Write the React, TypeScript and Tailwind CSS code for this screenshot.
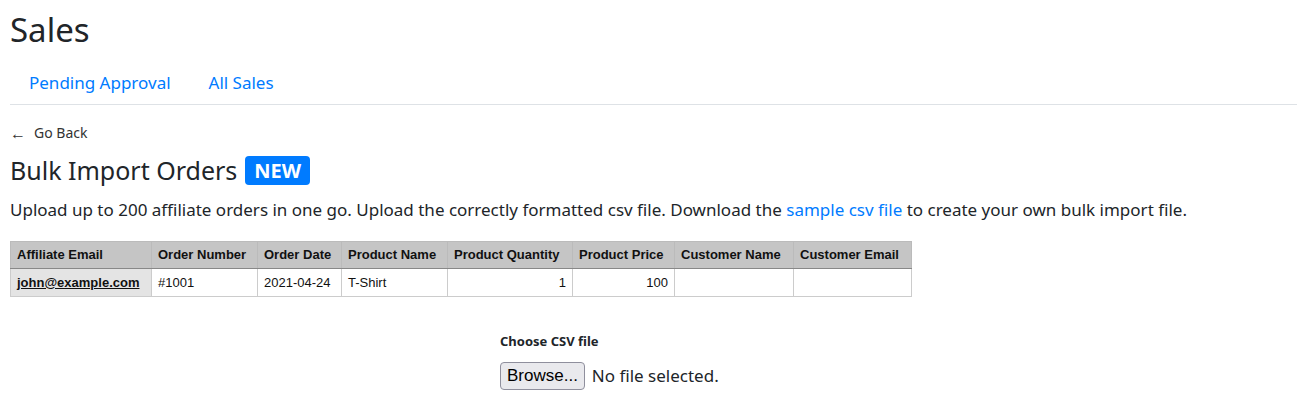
const cols = [
  { label: 'Affiliate Email', w: 'w-[141px]' },
  { label: 'Order Number', w: 'w-[106px]' },
  { label: 'Order Date', w: 'w-[84px]' },
  { label: 'Product Name', w: 'w-[106px]' },
  { label: 'Product Quantity', w: 'w-[125px]' },
  { label: 'Product Price', w: 'w-[102px]' },
  { label: 'Customer Name', w: 'w-[119px]' },
  { label: 'Customer Email', w: 'w-[118px]' },
]

const row = [
  { v: 'john@example.com', cls: 'font-bold underline bg-[#e4e4e4]' },
  { v: '#1001', cls: '' },
  { v: '2021-04-24', cls: '' },
  { v: 'T-Shirt', cls: '' },
  { v: '1', cls: 'text-right' },
  { v: '100', cls: 'text-right' },
  { v: '', cls: '' },
  { v: '', cls: '' },
]

export default function App() {
  return (
    <div className="min-h-[400px] bg-white px-[10px] pt-[10px] font-['Noto_Sans',sans-serif] text-[#212529]">
      <h1 className="text-[33px] leading-[40px] font-normal">Sales</h1>

      <nav className="mt-[21px] flex border-b border-[#dee2e6] pb-[9px] pl-[19px] text-[17px] leading-[24px] text-[#007bff]">
        <a className="mr-[38px]">Pending Approval</a>
        <a>All Sales</a>
      </nav>

      <div className="mt-[18px] flex items-center text-[14px] leading-[20px] text-[#333]">
        <span className="w-[24px] text-[16px]">←</span>
        <span>Go Back</span>
      </div>

      <div className="mt-[10px] flex items-center gap-[8px]">
        <h2 className="text-[25px] leading-[34px]">Bulk Import Orders</h2>
        <span className="rounded-[4px] bg-[#007bff] px-[9px] text-[20px] leading-[29px] font-bold text-white">NEW</span>
      </div>

      <p className="mt-[10px] text-[17px] leading-[25px]">
        Upload up to 200 affiliate orders in one go. Upload the correctly formatted csv file. Download the{' '}
        <a className="text-[#007bff]">sample csv file</a> to create your own bulk import file.
      </p>

      <table className="mt-[19px] border-collapse font-['Liberation_Sans',Arial,sans-serif] text-[13px] text-[#111]">
        <thead>
          <tr className="bg-[#c5c5c5]">
            {cols.map((c) => (
              <th key={c.label} className={`${c.w} h-[27px] border border-[#bbb] border-b-[#888] px-[6px] text-left font-bold whitespace-nowrap`}>
                {c.label}
              </th>
            ))}
          </tr>
        </thead>
        <tbody>
          <tr>
            {row.map((c, i) => (
              <td key={i} className={`h-[28px] border border-[#ccc] px-[6px] ${c.cls}`}>
                {c.v}
              </td>
            ))}
          </tr>
        </tbody>
      </table>

      <div className="mt-[35px] ml-[490px] flex flex-col">
        <label className="text-[13px] leading-[18px] font-bold text-[#212529]">Choose CSV file</label>
        <div className="mt-[12px] flex items-center gap-[7px] text-[17px]">
          <button className="h-[28px] rounded-[4px] border border-[#8f8f9d] bg-[#e9e9ed] px-[6px] font-['Liberation_Sans',Arial,sans-serif] text-[17px] leading-[24px] text-black">
            Browse...
          </button>
          <span>No file selected.</span>
        </div>
      </div>
    </div>
  )
}
